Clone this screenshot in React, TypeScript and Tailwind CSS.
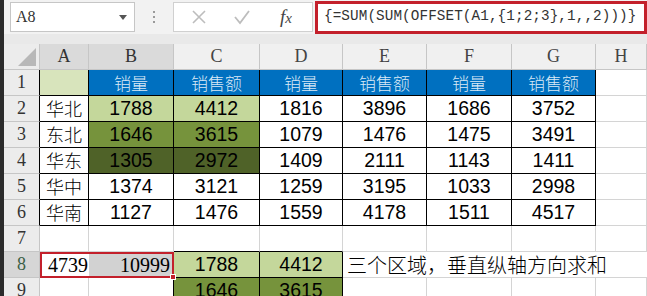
import React from "react"

const serif = "font-['Liberation_Serif','Noto_Sans_CJK_SC',serif]"
const sans = "font-['Liberation_Sans','Noto_Sans_CJK_SC',sans-serif]"
const cjk = "font-['Noto_Sans_CJK_SC',sans-serif]"

const data = [
  ["华北", "1788", "4412", "1816", "3896", "1686", "3752"],
  ["东北", "1646", "3615", "1079", "1476", "1475", "3491"],
  ["华东", "1305", "2972", "1409", "2111", "1143", "1411"],
  ["华中", "1374", "3121", "1259", "3195", "1033", "2998"],
  ["华南", "1127", "1476", "1559", "4178", "1511", "4517"],
]

// fills for columns B and C on rows 2-4
const greens = ["bg-[#c4d79b]", "bg-[#76933c]", "bg-[#4f6228]"]

function Cell({
  children,
  fill = "bg-white",
  dark = false,
  rb = false,
  bb = false,
  className = "",
}: {
  children?: React.ReactNode
  fill?: string
  dark?: boolean
  rb?: boolean
  bb?: boolean
  className?: string
}) {
  return (
    <div
      className={`flex items-center justify-center border-r border-b ${dark || rb ? "border-r-black" : "border-r-[#d4d4d4]"} ${dark || bb ? "border-b-black" : "border-b-[#d4d4d4]"} ${fill} ${className}`}
    >
      {children}
    </div>
  )
}

function RowHead({ n, dark = false, active = false }: { n: number; dark?: boolean; active?: boolean }) {
  return (
    <div
      className={`flex items-center justify-center border-b border-b-[#c6c6c6] border-r ${dark ? "border-r-black" : "border-r-[#c6c6c6]"} ${active ? "bg-[#d6d6d6] text-[#3b5e45]" : "bg-[#ececec] text-[#333]"} ${serif} text-[18px]`}
    >
      {n}
    </div>
  )
}

export default function App() {
  const cols = ["A", "B", "C", "D", "E", "F", "G", "H"]
  return (
    <div className="flex h-[296px] w-[647px] overflow-hidden bg-white">
      <div className="w-[4px] shrink-0 bg-[#2b2b2b]" />
      <div className="flex min-w-0 flex-1 flex-col">
        {/* formula bar */}
        <div className="flex h-[34px] shrink-0 items-center bg-[#f2f2f2] pl-[6px]">
          <div className="flex h-[30px] w-[125px] items-center justify-between border border-[#c6c6c6] bg-white pl-[5px] pr-[7px]">
            <span className={`${serif} text-[16px] text-[#333]`}>A8</span>
            <svg width="8" height="5" viewBox="0 0 8 5">
              <path d="M0 0h8L4 5z" fill="#555" />
            </svg>
          </div>
          <div className="flex w-[38px] flex-col items-center gap-[3px]">
            <span className="h-[2px] w-[2px] bg-[#9a9a9a]" />
            <span className="h-[2px] w-[2px] bg-[#9a9a9a]" />
            <span className="h-[2px] w-[2px] bg-[#9a9a9a]" />
          </div>
          <div className="flex h-[30px] w-[140px] items-center border border-[#d0d0d0] bg-white">
            <div className="flex w-[46px] justify-center pl-[4px]">
              <svg width="16" height="16" viewBox="0 0 16 16">
                <path d="M2 2l12 12M14 2L2 14" stroke="#bdbdbd" strokeWidth="1.6" />
              </svg>
            </div>
            <div className="flex w-[44px] justify-center">
              <svg width="18" height="16" viewBox="0 0 18 16">
                <path d="M2 8l5 6L16 2" stroke="#bdbdbd" strokeWidth="1.8" fill="none" />
              </svg>
            </div>
            <div className={`flex w-[44px] items-baseline justify-center ${serif} italic text-[#444]`}>
              <span className="text-[19px]">f</span>
              <span className="text-[15px]">x</span>
            </div>
          </div>
          <div className="ml-[2px] flex h-[33px] flex-1 items-center border-[3px] border-[#c3202b] bg-white pl-[6px]">
            <span className="font-['Liberation_Mono',monospace] text-[14.3px] tracking-[0.1px] text-[#333]">
              {"{=SUM(SUM(OFFSET(A1,{1;2;3},1,,2)))}"}
            </span>
          </div>
        </div>
        <div className="h-[10px] shrink-0 bg-[#e9e9e9]" />

        {/* sheet */}
        <div className="grid shrink-0 grid-cols-[36px_49px_85px_86px_83px_84px_85px_84px_1fr] auto-rows-[26px]">
          {/* column headers */}
          <div className="relative border-r border-b border-[#c6c6c6] bg-[#ececec]">
            <svg className="absolute bottom-[3px] right-[3px]" width="18" height="18" viewBox="0 0 18 18">
              <path d="M18 0V18H0z" fill="#b8b8b8" />
            </svg>
          </div>
          {cols.map((c, i) => (
            <div
              key={c}
              className={`flex items-center justify-center border-r border-b border-[#c6c6c6] ${i < 2 ? "bg-[#dadada] text-[#333]" : "bg-[#f0f0f0] text-[#444]"} ${serif} text-[18px]`}
            >
              {c}
            </div>
          ))}

          {/* row 1 */}
          <RowHead n={1} dark />
          <Cell dark fill="bg-[#d8e4bc]" />
          {["销量", "销售额", "销量", "销售额", "销量", "销售额"].map((t, i) => (
            <Cell key={i} dark fill="bg-[#0070c0]" className={`${cjk} text-[17px] font-light text-[#dbe9f6]`}>
              {t}
            </Cell>
          ))}
          <Cell />

          {/* rows 2-6 */}
          {data.map((row, r) => (
            <React.Fragment key={r}>
              <RowHead n={r + 2} dark />
              {row.map((v, c) => (
                <Cell
                  key={c}
                  dark
                  fill={r < 3 && (c === 1 || c === 2) ? greens[r] : "bg-white"}
                  className={`${c === 0 ? `${cjk} text-[18px] font-light` : `${sans} text-[19.5px]`} text-black`}
                >
                  {v}
                </Cell>
              ))}
              <Cell />
            </React.Fragment>
          ))}

          {/* row 7 */}
          <RowHead n={7} />
          <Cell />
          <Cell />
          <Cell bb />
          <Cell bb />
          <Cell />
          <Cell />
          <Cell />
          <Cell />

          {/* row 8 */}
          <RowHead n={8} active />
          <div className="relative col-span-2 flex border-2 border-[#c3202b]">
            <div className={`flex w-[47px] items-center justify-end pr-[1px] bg-white ${serif} text-[20px] text-black`}>
              4739
            </div>
            <div className={`flex flex-1 items-center justify-end pr-[2px] bg-[#d2d2d2] ${serif} text-[20px] text-black`}>
              10999
            </div>
            <span className="absolute -bottom-[4px] -right-[4px] h-[6px] w-[6px] border border-white bg-[#c3202b]" />
          </div>
          <Cell dark fill="bg-[#c4d79b]" className={`${sans} text-[19.5px] text-black`}>
            1788
          </Cell>
          <Cell dark fill="bg-[#c4d79b]" className={`${sans} text-[19.5px] text-black`}>
            4412
          </Cell>
          <div className={`col-span-4 flex items-center whitespace-nowrap border-b border-b-[#d4d4d4] pl-[4px] ${cjk} text-[20px] font-light text-black`}>
            三个区域，垂直纵轴方向求和
          </div>

          {/* row 9 */}
          <RowHead n={9} />
          <Cell />
          <Cell rb />
          <Cell dark fill="bg-[#76933c]" className={`${sans} text-[19.5px] text-black`}>
            1646
          </Cell>
          <Cell dark fill="bg-[#76933c]" className={`${sans} text-[19.5px] text-black`}>
            3615
          </Cell>
          <Cell />
          <Cell />
          <Cell />
          <Cell />
        </div>
      </div>
    </div>
  )
}
